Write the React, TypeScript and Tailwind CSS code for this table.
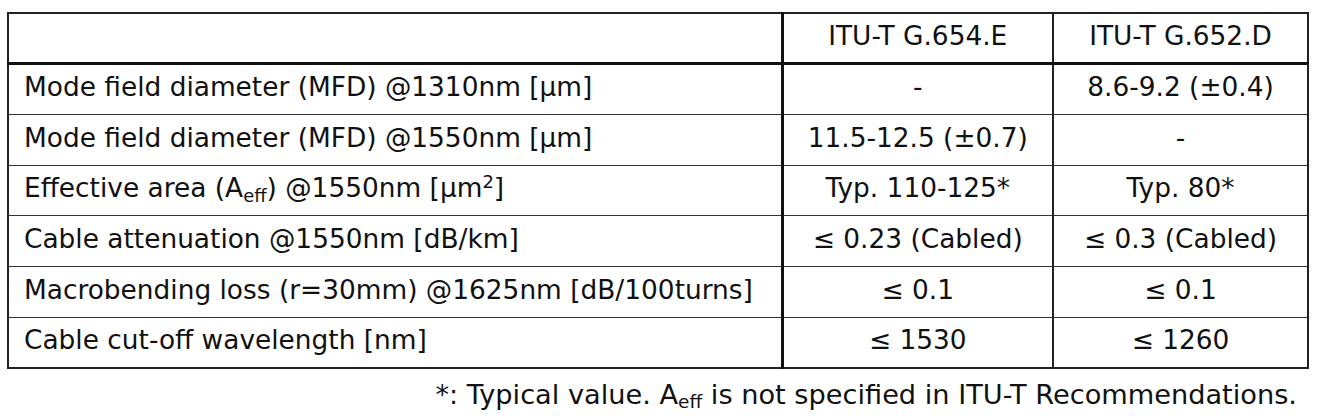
const ROWS: { label: React.ReactNode; e: string; d: string }[] = [
  { label: "Mode field diameter (MFD) @1310nm [µm]", e: "-", d: "8.6-9.2 (±0.4)" },
  { label: "Mode field diameter (MFD) @1550nm [µm]", e: "11.5-12.5 (±0.7)", d: "-" },
  {
    label: (
      <>
        Effective area (A<sub className="text-[0.68em]">eff</sub>) @1550nm [µm<sup className="text-[0.68em]">2</sup>]
      </>
    ),
    e: "Typ. 110-125*",
    d: "Typ. 80*",
  },
  { label: "Cable attenuation @1550nm [dB/km]", e: "≤ 0.23 (Cabled)", d: "≤ 0.3 (Cabled)" },
  { label: "Macrobending loss (r=30mm) @1625nm [dB/100turns]", e: "≤ 0.1", d: "≤ 0.1" },
  { label: "Cable cut-off wavelength [nm]", e: "≤ 1530", d: "≤ 1260" },
]

export default function App() {
  return (
    <div
      className="h-[419px] w-[1319px] bg-white pl-[7px] pt-[12px] text-[#111] text-[26.4px] leading-none"
      style={{ fontFamily: '"DejaVu Sans", Verdana, sans-serif' }}
    >
      <table className="w-[1300px] table-fixed border-collapse border-2 border-[#222]">
        <colgroup>
          <col className="w-[774px]" />
          <col className="w-[271px]" />
          <col className="w-[255px]" />
        </colgroup>
        <thead>
          <tr className="h-[50.7px] border-b-[3px] border-[#111]">
            <th className="border-r-[3px] border-[#111]"></th>
            <th className="border-r-2 border-[#222] pb-[4px] text-center font-normal">ITU-T G.654.E</th>
            <th className="pb-[4px] text-center font-normal">ITU-T G.652.D</th>
          </tr>
        </thead>
        <tbody>
          {ROWS.map((r, i) => (
            <tr key={i} className="h-[50.7px] border-t border-[#333]">
              <td className="border-r-[3px] border-[#111] pb-[4px] pl-[15px] text-left">{r.label}</td>
              <td className="border-r-2 border-[#222] pb-[4px] text-center">{r.e}</td>
              <td className="pb-[4px] text-center">{r.d}</td>
            </tr>
          ))}
        </tbody>
      </table>
      <p className="mt-[12px] w-[1290px] text-right text-[27.2px]">
        *: Typical value. A<sub className="text-[0.68em]">eff</sub> is not specified in ITU-T Recommendations.
      </p>
    </div>
  )
}
